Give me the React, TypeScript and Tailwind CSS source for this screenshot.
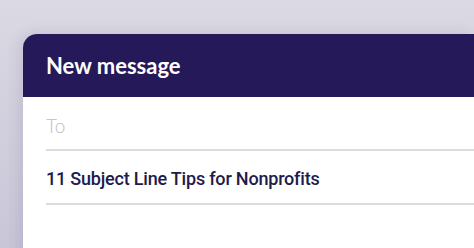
export default function App() {
  return (
    <div className="h-[248px] w-[474px] overflow-hidden bg-gradient-to-b from-[#dbd9e3] to-[#c9c6d8] pl-[23px] pt-[34px] font-['Lato',sans-serif]">
      <div className="h-[260px] overflow-hidden rounded-tl-[14px] bg-white shadow-[-4px_0_14px_rgba(60,50,110,0.12)]">
        <div className="flex h-[63px] items-center bg-[#26195a] pl-[23px]">
          <h1 className="text-[22px] font-bold text-white">New message</h1>
        </div>
        <div className="pl-[23px]">
          <div className="flex h-[54px] items-center border-b-2 border-[#dcdce0] pt-[6px] text-[19px] font-light text-[#bdbdc4]">
            To
          </div>
          <div className="flex h-[54px] items-center border-b-2 border-[#dcdce0] pt-[2px] font-['Roboto',sans-serif] text-[18px] font-medium tracking-[-0.2px] text-[#211a4c]">
            11 Subject Line Tips for Nonprofits
          </div>
        </div>
      </div>
    </div>
  );
}
